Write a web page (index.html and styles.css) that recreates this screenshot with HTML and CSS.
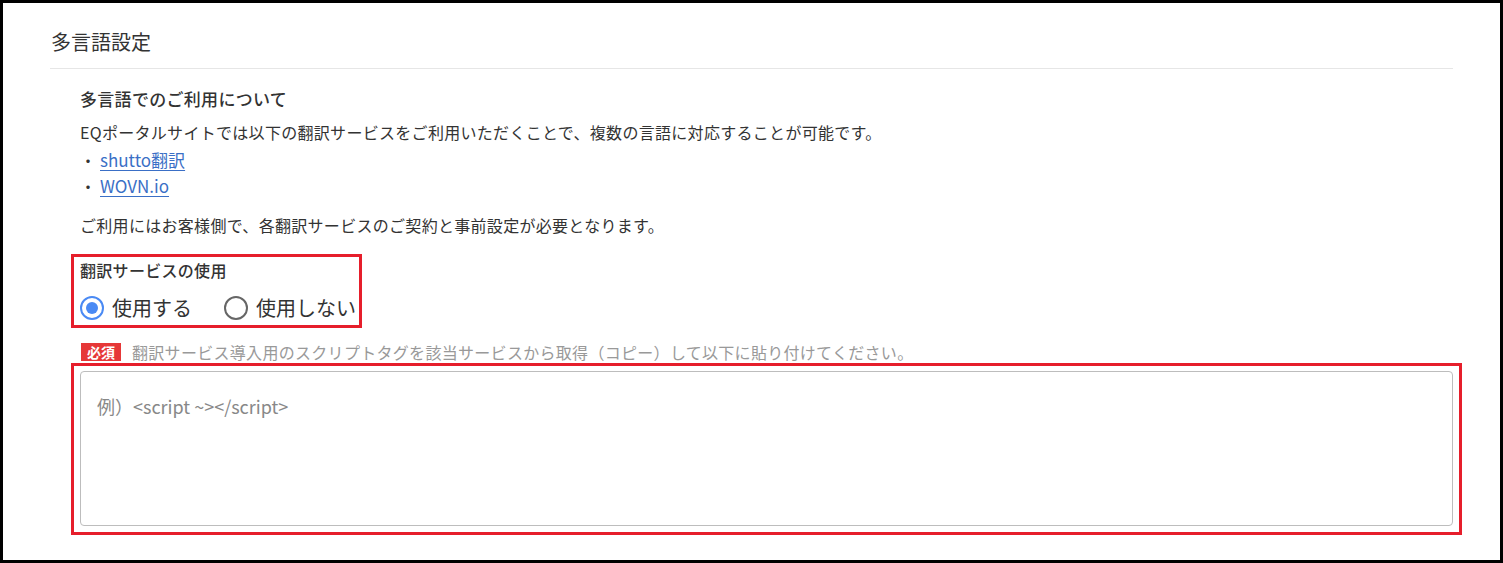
FILE: index.html
```html
<!DOCTYPE html>
<html lang="ja">
  <head>
    <meta charset="UTF-8" />
    <meta name="viewport" content="width=device-width, initial-scale=1.0" />
    <title>多言語設定</title>
    <link rel="stylesheet" href="styles.css">
  </head>
  <body>
    <div class="frame">
      <h2 class="section-title">多言語設定</h2>

      <div class="section-body">
        <h3 class="sub-title">多言語でのご利用について</h3>
        <p class="text">EQポータルサイトでは以下の翻訳サービスをご利用いただくことで、複数の言語に対応することが可能です。</p>
        <ul class="service-list">
          <li><a href="#" class="link">shutto翻訳</a></li>
          <li><a href="#" class="link">WOVN.io</a></li>
        </ul>
        <p class="text note">ご利用にはお客様側で、各翻訳サービスのご契約と事前設定が必要となります。</p>

        <div class="mark-box use-box">
          <div class="field-label">翻訳サービスの使用</div>
          <div class="radio-group">
            <label class="radio">
              <input type="radio" name="use" checked>
              <span>使用する</span>
            </label>
            <label class="radio">
              <input type="radio" name="use">
              <span>使用しない</span>
            </label>
          </div>
        </div>

        <div class="required-row">
          <span class="badge">必須</span>
          <span class="hint">翻訳サービス導入用のスクリプトタグを該当サービスから取得（コピー）して以下に貼り付けてください。</span>
        </div>

        <div class="mark-box script-box">
          <textarea class="script-input" placeholder="例）<script ~></script>"></textarea>
        </div>
      </div>
    </div>
  </body>
</html>
```

FILE: styles.css
```css
html, body {
  margin: 0;
  padding: 0;
}
body {
  font-family: "Noto Sans CJK JP", "Noto Sans", sans-serif;
  color: #333;
  background-color: #fff;
}
.frame {
  height: 100vh;
  border: 3px solid #000;
  box-sizing: border-box;
  padding: 24px 47px 0 47px;
  overflow: hidden;
}
.section-title {
  margin: 0;
  font-size: 20px;
  font-weight: normal;
  line-height: 30px;
  padding: 0 0 11px 1px;
  border-bottom: 1px solid #e6e6e6;
}
.section-body {
  padding-left: 30px;
}
.sub-title {
  margin: 17px 0 0;
  font-size: 17px;
  font-weight: 500;
  line-height: 26px;
  letter-spacing: 0.3px;
}
.text {
  margin: 7px 0 0;
  font-size: 16px;
  line-height: 26px;
  letter-spacing: 0.3px;
}
.service-list {
  list-style: none;
  margin: 2px 0 0;
  padding: 0;
  font-size: 16px;
  line-height: 26px;
}
.service-list li::before {
  content: "・";
  display: inline-block;
  width: 20px;
}
.link {
  color: #3a6fc6;
  font-size: 17px;
  text-decoration: underline;
  text-underline-offset: 3px;
}
.note {
  margin-top: 13px;
}
.mark-box {
  border: 3px solid #e61e2b;
  margin-left: -9px;
  padding-left: 6px;
}
.use-box {
  width: fit-content;
  margin-top: 16px;
  padding-top: 1px;
  padding-right: 3px;
  padding-bottom: 2px;
}
.field-label {
  font-size: 16px;
  font-weight: 500;
  line-height: 24px;
  letter-spacing: 0.3px;
}
.radio-group {
  display: flex;
  gap: 32px;
  margin-top: 11px;
  line-height: 30px;
  font-size: 20px;
  white-space: nowrap;
}
.radio {
  display: flex;
  align-items: center;
  gap: 8px;
  cursor: pointer;
}
.radio input {
  appearance: none;
  -webkit-appearance: none;
  margin: 0;
  width: 24px;
  height: 24px;
  flex: none;
  border: 2px solid #666;
  border-radius: 50%;
  box-sizing: border-box;
  position: relative;
}
.radio input:checked {
  border-color: #4a8af4;
}
.radio input:checked::after {
  content: "";
  position: absolute;
  top: 4px;
  left: 4px;
  width: 12px;
  height: 12px;
  border-radius: 50%;
  background-color: #4a8af4;
}
.required-row {
  display: flex;
  align-items: center;
  margin-top: 13px;
  height: 22px;
  white-space: nowrap;
}
.badge {
  background-color: #e63838;
  color: #fff;
  font-size: 14px;
  font-weight: bold;
  line-height: 18px;
  width: 40px;
  text-align: center;
  margin-left: 1px;
}
.hint {
  margin-left: 11px;
  font-size: 16px;
  letter-spacing: 0.3px;
  color: #999;
}
.script-box {
  margin-right: -9px;
  padding: 5px 6px 6px;
}
.script-input {
  display: block;
  width: 100%;
  height: 155px;
  box-sizing: border-box;
  border: 1px solid #bdbdbd;
  border-radius: 4px;
  padding: 21px 16px;
  font-family: "Noto Sans CJK JP", "Noto Sans", sans-serif;
  font-size: 18px;
  line-height: 26px;
  color: #333;
  resize: none;
}
.script-input::placeholder {
  color: #888;
}
```
